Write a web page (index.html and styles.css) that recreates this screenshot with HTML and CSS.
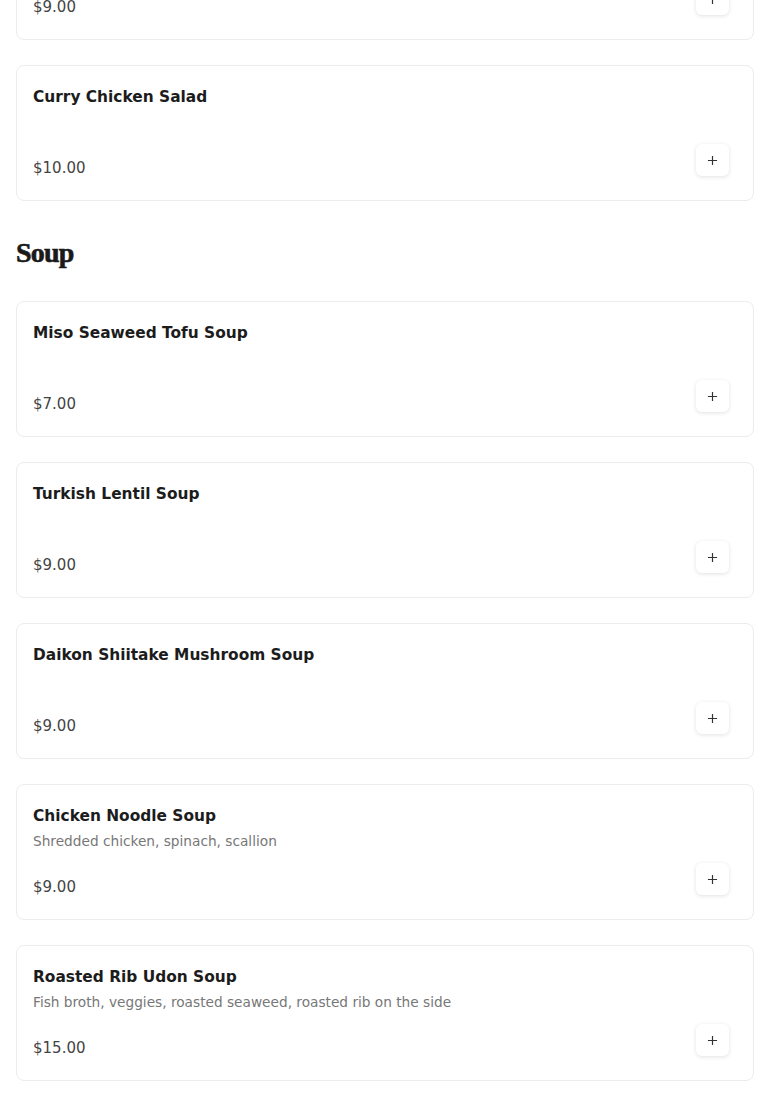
FILE: index.html
```html
<!DOCTYPE html>
<html lang="en">
<head>
  <meta charset="utf-8" />
  <title>Menu</title>
  <link rel="stylesheet" href="styles.css">
</head>
<body>
  <div id="menu">
    <section class="category scrolled">
      <div class="item">
        <div class="item-name">Cold Noodle Salad</div>
        <div class="item-row">
          <span class="item-price">$9.00</span>
          <button class="add-btn"><svg viewBox="0 0 12 12"><path d="M6 1v10M1 6h10"/></svg></button>
        </div>
      </div>
      <div class="item">
        <div class="item-name">Curry Chicken Salad</div>
        <div class="item-row">
          <span class="item-price">$10.00</span>
          <button class="add-btn"><svg viewBox="0 0 12 12"><path d="M6 1v10M1 6h10"/></svg></button>
        </div>
      </div>
    </section>

    <h2 class="category-title">Soup</h2>
    <section class="category">
      <div class="item">
        <div class="item-name">Miso Seaweed Tofu Soup</div>
        <div class="item-row">
          <span class="item-price">$7.00</span>
          <button class="add-btn"><svg viewBox="0 0 12 12"><path d="M6 1v10M1 6h10"/></svg></button>
        </div>
      </div>
      <div class="item">
        <div class="item-name">Turkish Lentil Soup</div>
        <div class="item-row">
          <span class="item-price">$9.00</span>
          <button class="add-btn"><svg viewBox="0 0 12 12"><path d="M6 1v10M1 6h10"/></svg></button>
        </div>
      </div>
      <div class="item">
        <div class="item-name">Daikon Shiitake Mushroom Soup</div>
        <div class="item-row">
          <span class="item-price">$9.00</span>
          <button class="add-btn"><svg viewBox="0 0 12 12"><path d="M6 1v10M1 6h10"/></svg></button>
        </div>
      </div>
      <div class="item">
        <div class="item-name">Chicken Noodle Soup</div>
        <div class="item-desc">Shredded chicken, spinach, scallion</div>
        <div class="item-row">
          <span class="item-price">$9.00</span>
          <button class="add-btn"><svg viewBox="0 0 12 12"><path d="M6 1v10M1 6h10"/></svg></button>
        </div>
      </div>
      <div class="item">
        <div class="item-name">Roasted Rib Udon Soup</div>
        <div class="item-desc">Fish broth, veggies, roasted seaweed, roasted rib on the side</div>
        <div class="item-row">
          <span class="item-price">$15.00</span>
          <button class="add-btn"><svg viewBox="0 0 12 12"><path d="M6 1v10M1 6h10"/></svg></button>
        </div>
      </div>
    </section>
  </div>
</body>
</html>
```

FILE: styles.css
```css
body {
  margin: 0;
  background: #fff;
  font-family: "DejaVu Sans", "Open Sans", sans-serif;
  color: #1a1a1a;
}
#menu {
  padding: 0 16px 40px;
}
.category {
  display: flex;
  flex-direction: column;
  gap: 25px;
}
/* page is scrolled part way into the salad section */
.scrolled {
  margin-top: -96px;
}
.category-title {
  font-family: "Liberation Serif", serif;
  font-weight: bold;
  font-size: 28px;
  line-height: 32px;
  margin: 36px 0 32px;
  color: #1a1a1a;
  letter-spacing: -0.8px;
  -webkit-text-stroke: 0.6px #1a1a1a;
}
.item {
  box-sizing: border-box;
  height: 136px;
  border: 1px solid #ececec;
  border-radius: 8px;
  padding: 17px 24px 24px 16px;
  display: flex;
  flex-direction: column;
}
.item-name {
  font-size: 15.4px;
  font-weight: bold;
  line-height: 28px;
  color: #1c1c1c;
}
.item-desc {
  font-size: 13.7px;
  line-height: 22px;
  color: #777;
}
.item-row {
  margin-top: auto;
  display: flex;
  justify-content: space-between;
}
.item-price {
  align-self: flex-end;
  font-size: 15px;
  line-height: 16px;
  color: #444;
}
.add-btn {
  width: 33px;
  height: 32px;
  padding: 0;
  border: none;
  border-radius: 6px;
  background: #fff;
  box-shadow: 0 1px 4px rgba(0, 0, 0, 0.12);
  display: flex;
  align-items: center;
  justify-content: center;
}
.add-btn svg {
  width: 11px;
  height: 11px;
  stroke: #333;
  stroke-width: 1.3;
  fill: none;
}
```
